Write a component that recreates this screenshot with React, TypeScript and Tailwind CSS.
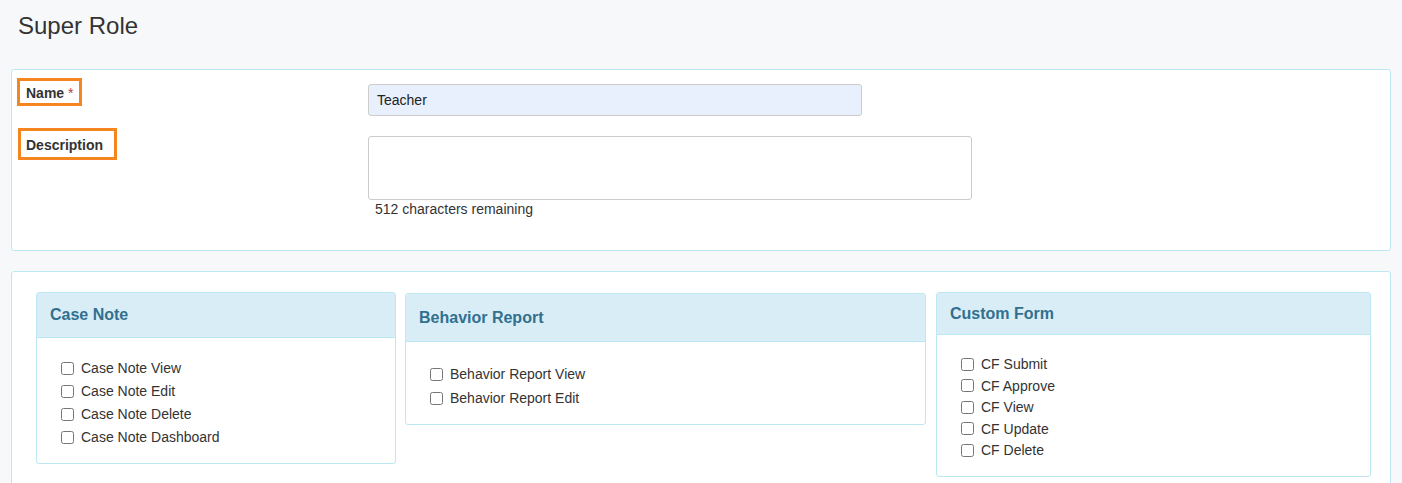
import React from "react";

const Card = ({ title, items, w, hh, pt, gap, mr }: { title: string; items: string[]; w: string; hh: string; pt: string; gap: string; mr?: string }) => (
  <div className={`${w} ${mr ?? ""} border border-[#bce8f1] rounded-[3px] bg-white shrink-0`}>
    <div className={`${hh} bg-[#d9edf7] border-b border-[#bce8f1] flex items-center px-[13px] text-[16px] font-bold text-[#31708f]`}>{title}</div>
    <div className={`${pt} pb-[18px] pl-[24px] flex flex-col ${gap}`}>
      {items.map((t) => (
        <label key={t} className="flex items-center text-[14px] text-[#333] leading-[16px]">
          <input type="checkbox" className="w-[13px] h-[13px] mr-[7px] m-0" />
          {t}
        </label>
      ))}
    </div>
  </div>
);

export default function App() {
  return (
    <div className="w-[1402px] h-[483px] bg-[#f7f8fa] overflow-hidden" style={{ fontFamily: '"Liberation Sans", Arial, sans-serif' }}>
      <div className="h-[69px] pl-[18px] pt-[12px] text-[24px] text-[#333] leading-[28px]">Super Role</div>
      <div className="mx-[11px] h-[182px] bg-white border border-[#bce8f1] rounded-[3px] relative">
        <div className="absolute left-[5px] top-[8px] w-[65px] h-[28px] border-[3px] border-[#f5861f]" />
        <div className="absolute left-[6px] top-[58px] w-[99px] h-[32px] border-[3px] border-[#f5861f]" />
        <div className="flex pt-[14px]">
          <div className="w-[356px] pl-[14px] text-[14px] font-bold text-[#333] leading-[16px] pt-[1px]">Name <span className="text-[#a94442] font-normal">*</span></div>
          <div className="w-[494px] h-[32px] bg-[#e8f0fe] border border-[#ccc] rounded-[3px] px-[8px] flex items-center text-[14px] text-[#222]">Teacher</div>
        </div>
        <div className="flex pt-[20px]">
          <div className="w-[356px] pl-[14px] text-[14px] font-bold text-[#333] leading-[16px] pt-[1px]">Description</div>
          <div>
            <div className="w-[604px] h-[64px] border border-[#ccc] rounded-[3px]" />
            <div className="pl-[7px] pt-[1px] text-[14px] text-[#333] leading-[16px]">512 characters remaining</div>
          </div>
        </div>
      </div>
      <div className="mx-[11px] mt-[20px] h-[300px] bg-white border border-[#bce8f1] rounded-[3px] flex items-start pt-[20px] pl-[24px]">
        <Card title="Case Note" items={["Case Note View", "Case Note Edit", "Case Note Delete", "Case Note Dashboard"]} w="w-[360px]" hh="h-[45px]" pt="pt-[22px]" gap="gap-[7px]" mr="mr-[9px]" />
        <div className="pt-[1px]">
          <Card title="Behavior Report" items={["Behavior Report View", "Behavior Report Edit"]} w="w-[521px]" hh="h-[48px]" pt="pt-[24px]" gap="gap-[8px]" mr="mr-[10px]" />
        </div>
        <Card title="Custom Form" items={["CF Submit", "CF Approve", "CF View", "CF Update", "CF Delete"]} w="w-[435px]" hh="h-[42px]" pt="pt-[21px]" gap="gap-[5.5px]" />
      </div>
    </div>
  );
}
